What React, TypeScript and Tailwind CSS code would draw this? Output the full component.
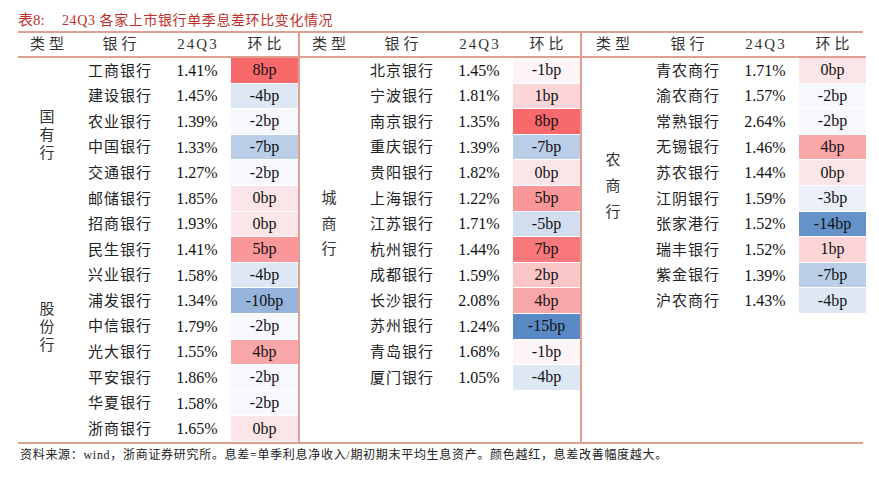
import React from "react";

type Row = { name: string; q3: string; bp: number };
type Group = { label: string[]; gap: string; rows: Row[] };

const SERIF = "font-['Liberation_Serif','Noto_Sans_CJK_SC',serif]";

// 表一：国有行 + 股份行
const table1: Group[] = [
  {
    label: ["国", "有", "行"],
    gap: "leading-[18px]",
    rows: [
      { name: "工商银行", q3: "1.41%", bp: 8 },
      { name: "建设银行", q3: "1.45%", bp: -4 },
      { name: "农业银行", q3: "1.39%", bp: -2 },
      { name: "中国银行", q3: "1.33%", bp: -7 },
      { name: "交通银行", q3: "1.27%", bp: -2 },
      { name: "邮储银行", q3: "1.85%", bp: 0 },
    ],
  },
  {
    label: ["股", "份", "行"],
    gap: "leading-[18px]",
    rows: [
      { name: "招商银行", q3: "1.93%", bp: 0 },
      { name: "民生银行", q3: "1.41%", bp: 5 },
      { name: "兴业银行", q3: "1.58%", bp: -4 },
      { name: "浦发银行", q3: "1.34%", bp: -10 },
      { name: "中信银行", q3: "1.79%", bp: -2 },
      { name: "光大银行", q3: "1.55%", bp: 4 },
      { name: "平安银行", q3: "1.86%", bp: -2 },
      { name: "华夏银行", q3: "1.58%", bp: -2 },
      { name: "浙商银行", q3: "1.65%", bp: 0 },
    ],
  },
];

const table2: Group[] = [
  {
    label: ["城", "商", "行"],
    gap: "leading-[25.6px]",
    rows: [
      { name: "北京银行", q3: "1.45%", bp: -1 },
      { name: "宁波银行", q3: "1.81%", bp: 1 },
      { name: "南京银行", q3: "1.35%", bp: 8 },
      { name: "重庆银行", q3: "1.39%", bp: -7 },
      { name: "贵阳银行", q3: "1.82%", bp: 0 },
      { name: "上海银行", q3: "1.22%", bp: 5 },
      { name: "江苏银行", q3: "1.71%", bp: -5 },
      { name: "杭州银行", q3: "1.44%", bp: 7 },
      { name: "成都银行", q3: "1.59%", bp: 2 },
      { name: "长沙银行", q3: "2.08%", bp: 4 },
      { name: "苏州银行", q3: "1.24%", bp: -15 },
      { name: "青岛银行", q3: "1.68%", bp: -1 },
      { name: "厦门银行", q3: "1.05%", bp: -4 },
    ],
  },
];

const table3: Group[] = [
  {
    label: ["农", "商", "行"],
    gap: "leading-[26px]",
    rows: [
      { name: "青农商行", q3: "1.71%", bp: 0 },
      { name: "渝农商行", q3: "1.57%", bp: -2 },
      { name: "常熟银行", q3: "2.64%", bp: -2 },
      { name: "无锡银行", q3: "1.46%", bp: 4 },
      { name: "苏农银行", q3: "1.44%", bp: 0 },
      { name: "江阴银行", q3: "1.59%", bp: -3 },
      { name: "张家港行", q3: "1.52%", bp: -14 },
      { name: "瑞丰银行", q3: "1.52%", bp: 1 },
      { name: "紫金银行", q3: "1.39%", bp: -7 },
      { name: "沪农商行", q3: "1.43%", bp: -4 },
    ],
  },
];

// 三色刻度：蓝(-15) → 白(中位数) → 红(8)
function bpColor(v: number) {
  const mid = -1.5;
  const white = [252, 252, 255];
  const red = [248, 105, 107];
  const blue = [90, 138, 198];
  const [t, end] = v >= mid ? [(v - mid) / (8 - mid), red] : [(mid - v) / (mid + 15), blue];
  const c = white.map((w, i) => Math.round(w + (end[i] - w) * t));
  return `rgb(${c[0]}, ${c[1]}, ${c[2]})`;
}

function Table({ groups, catW, last }: { groups: Group[]; catW: string; last?: boolean }) {
  return (
    <div className={`flex flex-col ${last ? "" : "border-r-2 border-[#dea090]"}`}>
      {/* 表头 */}
      <div className="flex h-[25px] items-center border-b-2 border-[#dea090] text-[15px] text-[#333]">
        <div className={`${catW} text-center tracking-[4px] pl-[4px]`}>类型</div>
        <div className="w-[87px] text-center tracking-[4px] pl-[4px]">银行</div>
        <div className="w-[68px] text-center tracking-[2px] pl-[2px]">24Q3</div>
        <div className="w-[67px] text-center tracking-[4px] pl-[4px]">环比</div>
      </div>
      {groups.map((g) => (
        <div key={g.label.join("")} className="flex">
          <div className={`${catW} flex flex-col items-center justify-center text-[15px] text-[#333] ${g.gap}`}>
            {g.label.map((ch) => (
              <span key={ch}>{ch}</span>
            ))}
          </div>
          <div className="flex flex-col">
            {g.rows.map((r) => (
              <div key={r.name} className="flex h-[25.6px] items-center text-[#111]">
                <div className="w-[87px] text-center text-[15px] tracking-[1px] pl-[1px] text-[#222]">{r.name}</div>
                <div className="w-[68px] text-center text-[16px]">{r.q3}</div>
                <div
                  className="w-[67px] h-full flex items-center justify-center text-[16px] border-b border-white"
                  style={{ backgroundColor: bpColor(r.bp) }}
                >
                  {r.bp}bp
                </div>
              </div>
            ))}
          </div>
        </div>
      ))}
    </div>
  );
}

export default function App() {
  return (
    <div className={`w-[879px] h-[482px] bg-white ${SERIF}`}>
      <div className="pl-[18px] pt-[9px] h-[31px] text-[#c0302a] flex items-start">
        <span className="w-[44px] text-[15px]">表8:</span>
        <span className="text-[14px] tracking-[0.6px] pt-[1px]">24Q3 各家上市银行单季息差环比变化情况</span>
      </div>
      <div className="ml-[18px] w-[845px] flex border-t-2 border-b-2 border-[#dea090] items-stretch">
        <Table groups={table1} catW="w-[58px]" />
        <Table groups={table2} catW="w-[58px]" />
        <Table groups={table3} catW="w-[62px]" last />
      </div>
      <p className="pl-[20px] pt-[2px] text-[12px] tracking-[0.7px] text-[#222]">
        资料来源：wind，浙商证券研究所。息差=单季利息净收入/期初期末平均生息资产。颜色越红，息差改善幅度越大。
      </p>
    </div>
  );
}
